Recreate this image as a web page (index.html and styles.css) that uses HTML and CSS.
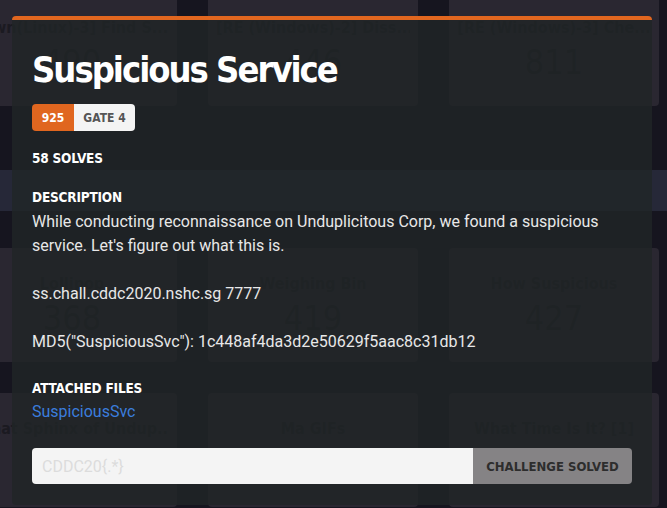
FILE: index.html
```html
<!DOCTYPE html>
<html lang="en">
<head>
<meta charset="utf-8">
<title>Suspicious Service</title>
<link rel="stylesheet" href="styles.css">
</head>
<body>
<div class="board">
  <div class="row">
    <div class="card"><div class="card-title">[Pwn(Linux)-3] Find S...</div><div class="card-value">490</div></div>
    <div class="card"><div class="card-title">[RE (Windows)-2] Diss...</div><div class="card-value">446</div></div>
    <div class="card"><div class="card-title">[RE (Windows)-3] Che...</div><div class="card-value">811</div></div>
  </div>
  <div class="band"></div>
  <div class="row">
    <div class="card"><div class="card-title">Lollipop</div><div class="card-value">368</div></div>
    <div class="card"><div class="card-title">Weighing Bin</div><div class="card-value">419</div></div>
    <div class="card"><div class="card-title">How Suspicious</div><div class="card-value">427</div></div>
  </div>
  <div class="row">
    <div class="card"><div class="card-title">What Sphinx of Undup...</div><div class="card-value">500</div></div>
    <div class="card"><div class="card-title">Ma GIFs</div><div class="card-value">500</div></div>
    <div class="card"><div class="card-title">What Time Is It? [1]</div><div class="card-value">500</div></div>
  </div>
</div>

<div class="modal">
  <h1 class="modal-title">Suspicious Service</h1>
  <div class="badges">
    <span class="badge badge-points">925</span><span class="badge badge-gate">GATE 4</span>
  </div>
  <div class="label solves">58 SOLVES</div>
  <div class="label">DESCRIPTION</div>
  <div class="desc">
    <p>While conducting reconnaissance on Unduplicitous Corp, we found a suspicious service. Let's figure out what this is.</p>
    <p>ss.chall.cddc2020.nshc.sg 7777</p>
    <p>MD5("SuspiciousSvc"): 1c448af4da3d2e50629f5aac8c31db12</p>
  </div>
  <div class="label files-label">ATTACHED FILES</div>
  <a class="file-link" href="#">SuspiciousSvc</a>
  <form class="flag-form">
    <input class="flag-input" type="text" placeholder="CDDC20{.*}">
    <button class="flag-btn" type="button">CHALLENGE SOLVED</button>
  </form>
</div>
</body>
</html>
```
FILE: styles.css
```css
* { box-sizing: border-box; }
html, body { margin: 0; padding: 0; }
body {
  width: 667px;
  height: 508px;
  overflow: hidden;
  background: #16151f;
  font-family: Roboto, "Liberation Sans", sans-serif;
  position: relative;
}
.board {
  margin-left: -33px;
  margin-top: -8px;
  width: 740px;
}
.row {
  display: grid;
  grid-template-columns: repeat(3, 210px);
  column-gap: 31px;
}
.row + .row { margin-top: 31px; }
.band {
  height: 41px;
  margin: 64px 0 37px 33px;
  background: #262838;
  width: 667px;
}
.card {
  height: 114px;
  background: #2a2731;
  border-radius: 4px;
  padding: 24px 8px 0;
  text-align: center;
  color: #1b1a21;
  font-family: "DejaVu Sans Condensed", "Liberation Sans", sans-serif;
  overflow: hidden;
}
.card-title {
  font-size: 16px;
  line-height: 24px;
  font-weight: bold;
  white-space: nowrap;
  overflow: hidden;
  text-overflow: clip;
}
.card-value { font-size: 34px; line-height: 40px; margin-top: 2px; }

.modal {
  position: absolute;
  left: 12px;
  top: 16px;
  width: 640px;
  height: 489px;
  background: rgba(32, 38, 39, 0.8);
  border-top: 4px solid #e1661f;
  border-radius: 4px;
  padding: 26px 20px 20px;
  color: #e8e8e8;
}
.modal-title {
  margin: 0;
  font-family: "DejaVu Sans Condensed", "Liberation Sans", sans-serif;
  font-weight: bold;
  font-size: 36px;
  line-height: 48px;
  letter-spacing: -2px;
  color: #ffffff;
}
.badges {
  display: flex;
  margin-top: 10px;
  height: 27px;
}
.badge {
  display: flex;
  align-items: center;
  justify-content: center;
  font-family: "DejaVu Sans Condensed", "Liberation Sans", sans-serif;
  font-weight: bold;
  font-size: 12px;
}
.badge-points {
  width: 42px;
  background: #e0661f;
  color: #ffffff;
  border-radius: 4px 0 0 4px;
}
.badge-gate {
  width: 61px;
  background: #f4f4f4;
  color: #555555;
  border-radius: 0 4px 4px 0;
}
.label {
  font-family: "DejaVu Sans Condensed", "Liberation Sans", sans-serif;
  font-weight: bold;
  font-size: 13.5px;
  line-height: 20px;
  letter-spacing: -0.2px;
  color: #ffffff;
}
.solves { margin-top: 17px; margin-bottom: 19px; }
.desc {
  margin-top: 3px;
  font-size: 16px;
  line-height: 24px;
  color: #e8e8e8;
}
.desc p { margin: 0 0 24px; }
.files-label { margin-top: 3px; }
.file-link {
  display: block;
  margin-top: 2px;
  font-size: 16px;
  line-height: 24px;
  color: #3b7ddd;
  text-decoration: none;
}
.flag-form {
  display: flex;
  margin-top: 24px;
  height: 36px;
}
.flag-input {
  flex: 1;
  min-width: 0;
  border: none;
  background: #f4f4f4;
  border-radius: 4px 0 0 4px;
  padding: 0 10px;
  font-family: Roboto, sans-serif;
  font-size: 16px;
  color: #333;
  outline: none;
}
.flag-input::placeholder { color: #dcdcdc; }
.flag-btn {
  width: 159px;
  border: none;
  background: #858385;
  color: #2d2d2d;
  border-radius: 0 4px 4px 0;
  font-family: "DejaVu Sans Condensed", "Liberation Sans", sans-serif;
  font-weight: bold;
  font-size: 13px;
  padding: 0;
}
```
